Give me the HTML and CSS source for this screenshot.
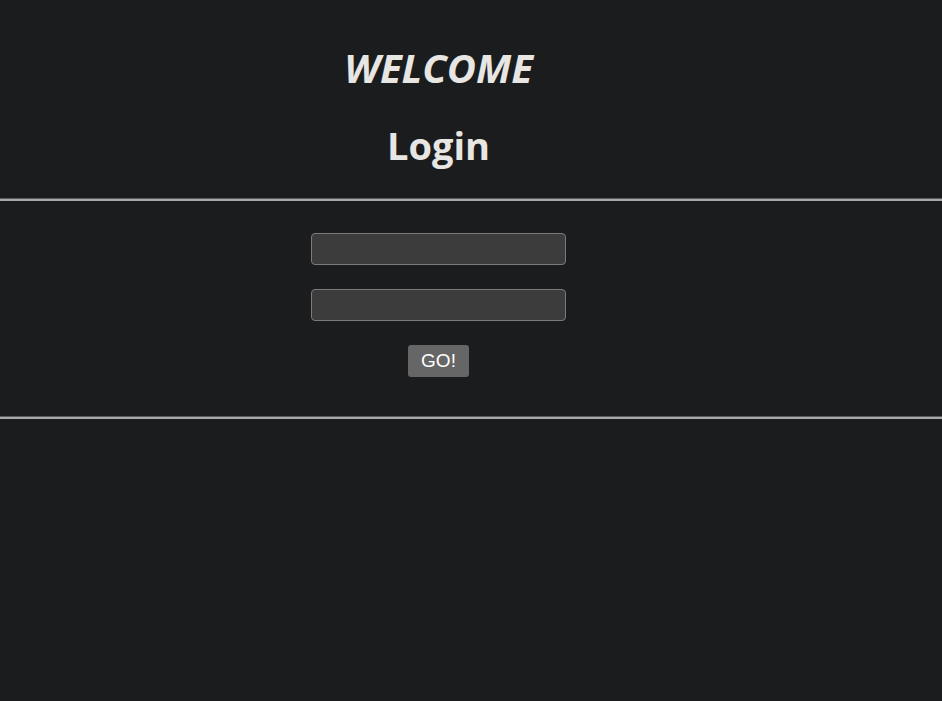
FILE: index.html
```
<html>
	<head>
		<title>Login</title>
		<meta name="viewport" content="width=device-width,initial-scale=1">
		<link rel="stylesheet" href="styles.css">
	</head>
	<body>
		<div class="header">
			<h2 class="welcome">WELCOME</h2>
			<h1 class="title">Login</h1>
		</div>
		<hr class="rule">
		<form class="login-form" onsubmit="return false;">
			<input class="field" type="text" name="username">
			<input class="field" type="password" name="password">
			<button class="go" type="submit">GO!</button>
		</form>
		<hr class="rule">
	</body>
</html>
```

FILE: styles.css
```
			* {
				margin: 0;
				padding: 0;
				box-sizing: border-box;
			}

			body {
				background: #1b1c1e;
				color: #e8e6e3;
				font-family: 'Open Sans', 'Noto Sans', sans-serif;
			}

			.header {
				width: 877px;
				display: flex;
				flex-direction: column;
				align-items: center;
				padding: 44px 0 29px;
				gap: 29px;
			}

			.welcome {
				font-size: 40px;
				font-style: italic;
				font-weight: 700;
				line-height: 48px;
			}

			.title {
				font-size: 38px;
				font-weight: 700;
				line-height: 48px;
			}

			.rule {
				border: 0;
				border-top: 1px solid #5c5c5c;
				border-bottom: 2px solid #a8a8a8;
				height: 0;
			}

			.login-form {
				width: 877px;
				display: flex;
				flex-direction: column;
				align-items: center;
				padding: 32px 0 39px;
				gap: 24px;
			}

			.field {
				width: 255px;
				height: 32px;
				background: #3c3c3c;
				border: 1px solid #7a7a7a;
				border-radius: 4px;
				color: #e8e6e3;
				font-size: 14px;
				padding: 0 8px;
				outline: none;
			}

			.go {
				width: 61px;
				height: 32px;
				background: #666666;
				border: 0;
				border-radius: 3px;
				color: #ffffff;
				font-family: 'Liberation Sans', Arial, sans-serif;
				font-size: 19px;
				cursor: pointer;
			}
```
